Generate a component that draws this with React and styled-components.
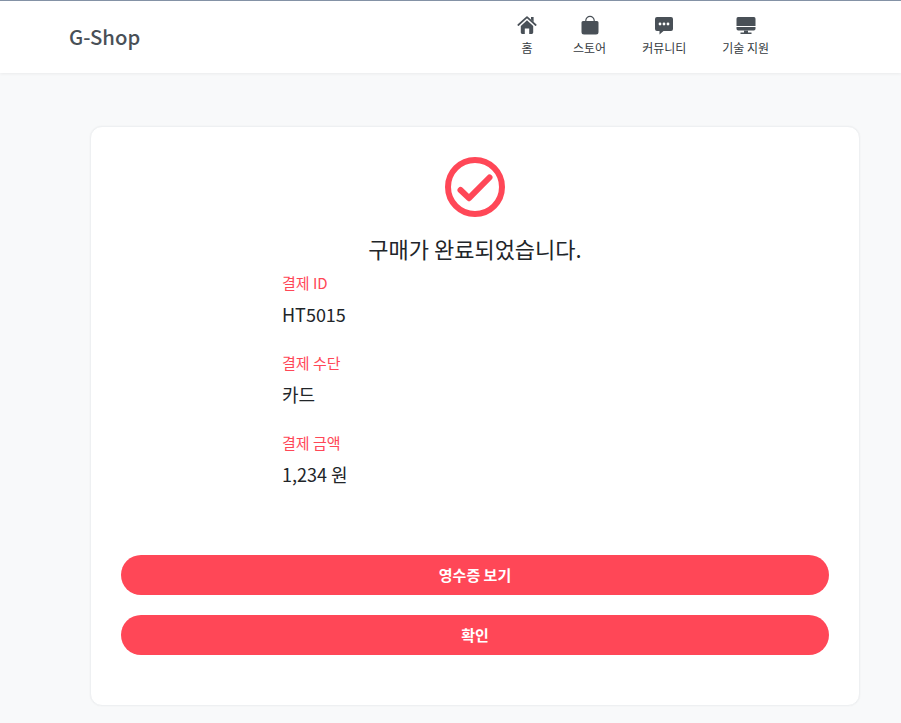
import React from "react";
import styled, { createGlobalStyle } from "styled-components";

const Global = createGlobalStyle`
  html, body { margin: 0; padding: 0; background: #f8f9fa; }
  body { font-family: "Noto Sans CJK KR", "Noto Sans", sans-serif; }
  * { box-sizing: border-box; }
`;
const Page = styled.div`
  height: 723px;
  overflow: hidden;
  background: #f8f9fa;
  border-top: 1px solid #8492a6;
`;
const Header = styled.header`
  height: 72px;
  background: #fff;
  box-shadow: 0 1px 3px rgba(0, 0, 0, 0.06);
  display: flex;
  align-items: center;
  padding: 0 0 2px 69px;
`;
const Logo = styled.div`
  font-size: 20.3px;
  font-weight: 500;
  color: #495057;
  width: 448px;
`;
const Nav = styled.nav`
  display: flex;
  gap: 36px;
`;
const NavItem = styled.a`
  display: flex;
  flex-direction: column;
  align-items: center;
  min-width: 20px;
  font-size: 12px;
  line-height: 18px;
  color: #343a40;
  svg { width: 20px; height: 20px; color: #495057; margin-bottom: 4px; display: block; }
`;
const Card = styled.main`
  margin: 53px 41px 0 90px;
  height: 580px;
  background: #fff;
  border: 1px solid #eef0f2;
  border-radius: 12px;
  box-shadow: 0 0 2px rgba(0, 0, 0, 0.05);
  padding: 30px;
  display: flex;
  flex-direction: column;
  align-items: center;
`;
const CheckMark = styled.svg`
  width: 60px;
  height: 60px;
  color: #ff4757;
  display: block;
  flex: none;
`;
const Title = styled.h1`
  margin: 15px 0 0;
  font-size: 22px;
  line-height: 33px;
  font-weight: 400;
  color: #212529;
`;
const Details = styled.dl`
  margin: 6px 0 0;
  align-self: flex-start;
  padding-left: 161px;
`;
const Label = styled.dt`
  font-size: 15px;
  line-height: 23px;
  color: #ff4757;
`;
const Value = styled.dd`
  margin: 7px 0 23px;
  font-size: 18px;
  line-height: 27px;
  color: #212529;
`;
const Buttons = styled.div`
  width: 100%;
  display: flex;
  flex-direction: column;
  gap: 20px;
  margin-top: 44px;
`;
const Button = styled.button`
  width: 100%;
  height: 40px;
  border: 0;
  border-radius: 20px;
  padding: 0 0 2px;
  background: #ff4757;
  color: #fff;
  font: 700 15px "Noto Sans CJK KR", sans-serif;
  flex: none;
`;

const HomeIcon = () => (
  <svg viewBox="0 0 20 20" fill="currentColor">
    <path d="M14 2h2.6v5L14 4.6Z" />
    <path d="M1.3 10 10 2.2 18.7 10" fill="none" stroke="currentColor" strokeWidth="1.7" strokeLinecap="round" strokeLinejoin="round" />
    <path d="M3.8 11 10 5.3 16.2 11v6.6a1.4 1.4 0 0 1-1.4 1.4H12.200v-5.500H7.800V19H5.200a1.400 1.400 0 0 1-1.400-1.400Z" />
  </svg>
);
const BagIcon = () => (
  <svg viewBox="0 0 20 20" fill="currentColor">
    <path d="M5.800 8V5.600a4.200 4.200 0 0 1 8.400 0V8" fill="none" stroke="currentColor" strokeWidth="1.200" />
    <path d="M1.500 7.500a1.500 1.500 0 0 1 1.500-1.500h14a1.500 1.500 0 0 1 1.500 1.500v9.500a2.500 2.500 0 0 1-2.500 2.500H4a2.500 2.500 0 0 1-2.500-2.500Z" />
  </svg>
);
const ChatIcon = () => (
  <svg viewBox="0 0 20 20" fill="currentColor">
    <path fillRule="evenodd" d="M3 2h14a2 2 0 0 1 2 2v10a2 2 0 0 1-2 2H9.500L5.500 19.500V16H3a2 2 0 0 1-2-2V4a2 2 0 0 1 2-2ZM6 7.600a1.400 1.400 0 1 0 0 2.800 1.400 1.400 0 0 0 0-2.800Zm4 0a1.400 1.400 0 1 0 0 2.800 1.400 1.400 0 0 0 0-2.800Zm4 0a1.400 1.400 0 1 0 0 2.800 1.400 1.400 0 0 0 0-2.800Z" />
  </svg>
);
const MonitorIcon = () => (
  <svg viewBox="0 0 20 20" fill="currentColor">
    <path d="M2 2h16a1.800 1.800 0 0 1 1.500 1.800V11H.500V3.800A1.800 1.800 0 0 1 2 2Z" />
    <path d="M.500 12h19v1.800a1.700 1.700 0 0 1-1.700 1.700H2.200a1.700 1.700 0 0 1-1.700-1.700Z" />
    <path d="M8 15.500h4V17.500h3.500V19h-11V17.500H8Z" />
  </svg>
);

export default function App() {
  return (
    <Page>
      <Global />
      <Header>
        <Logo>G-Shop</Logo>
        <Nav>
          <NavItem><HomeIcon />홈</NavItem>
          <NavItem><BagIcon />스토어</NavItem>
          <NavItem><ChatIcon />커뮤니티</NavItem>
          <NavItem><MonitorIcon />기술 지원</NavItem>
        </Nav>
      </Header>
      <Card>
        <CheckMark viewBox="0 0 60 60" fill="none" stroke="currentColor">
          <circle cx="30" cy="30" r="27" strokeWidth="6" />
          <path d="M15.500 33 24 41.200 44.500 20.500" strokeWidth="6" strokeLinecap="round" strokeLinejoin="round" />
        </CheckMark>
        <Title>구매가 완료되었습니다.</Title>
        <Details>
          <Label>결제 ID</Label>
          <Value>HT5015</Value>
          <Label>결제 수단</Label>
          <Value>카드</Value>
          <Label>결제 금액</Label>
          <Value>1,234 원</Value>
        </Details>
        <Buttons>
          <Button>영수증 보기</Button>
          <Button>확인</Button>
        </Buttons>
      </Card>
    </Page>
  );
}
